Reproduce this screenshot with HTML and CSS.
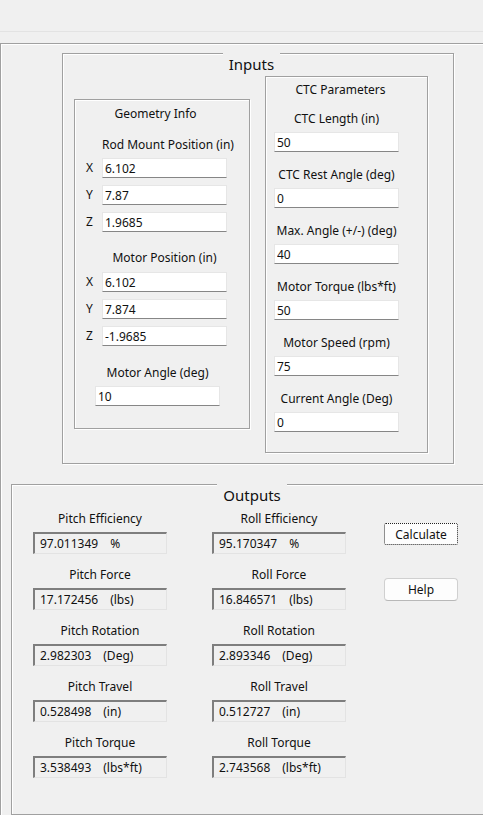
FILE: index.html
```html
<!DOCTYPE html>
<html lang="en">
<head>
  <meta charset="UTF-8" />
  <meta name="viewport" content="width=device-width, initial-scale=1.0" />
  <title>CTC Calculator</title>
  <link rel="stylesheet" href="styles.css">
</head>
<body>
  <div class="topbar"></div>

  <div class="panel">

    <!-- Inputs -->
    <div class="group inputs-group">
      <div class="group-title"><span>Inputs</span></div>
      <div class="inputs-row">

        <div class="sub geometry">
          <div class="sub-title geo-title">Geometry Info</div>

          <div class="geo-label">Rod Mount Position (in)</div>
          <div class="xyz first">
            <span class="axis">X</span><input type="text" value="6.102">
          </div>
          <div class="xyz">
            <span class="axis">Y</span><input type="text" value="7.87">
          </div>
          <div class="xyz">
            <span class="axis">Z</span><input type="text" value="1.9685">
          </div>

          <div class="geo-label motor-pos">Motor Position (in)</div>
          <div class="xyz first">
            <span class="axis">X</span><input type="text" value="6.102">
          </div>
          <div class="xyz">
            <span class="axis">Y</span><input type="text" value="7.874">
          </div>
          <div class="xyz">
            <span class="axis">Z</span><input type="text" value="-1.9685">
          </div>

          <div class="angle-field">
            <div class="field-label">Motor Angle (deg)</div>
            <input type="text" value="10">
          </div>
        </div>

        <div class="sub ctc">
          <div class="sub-title ctc-title">CTC Parameters</div>
          <div class="field">
            <div class="field-label">CTC Length (in)</div>
            <input type="text" value="50">
          </div>
          <div class="field">
            <div class="field-label">CTC Rest Angle (deg)</div>
            <input type="text" value="0">
          </div>
          <div class="field">
            <div class="field-label">Max. Angle (+/-) (deg)</div>
            <input type="text" value="40">
          </div>
          <div class="field">
            <div class="field-label">Motor Torque (lbs*ft)</div>
            <input type="text" value="50">
          </div>
          <div class="field">
            <div class="field-label">Motor Speed (rpm)</div>
            <input type="text" value="75">
          </div>
          <div class="field">
            <div class="field-label">Current Angle (Deg)</div>
            <input type="text" value="0">
          </div>
        </div>

      </div>
    </div>

    <!-- Outputs -->
    <div class="group outputs-group">
      <div class="group-title"><span>Outputs</span></div>
      <div class="outputs-row">

        <div class="out-col">
          <div class="out">
            <div class="field-label">Pitch Efficiency</div>
            <div class="readout">97.011349<span class="unit">%</span></div>
          </div>
          <div class="out">
            <div class="field-label">Pitch Force</div>
            <div class="readout">17.172456<span class="unit">(lbs)</span></div>
          </div>
          <div class="out">
            <div class="field-label">Pitch Rotation</div>
            <div class="readout">2.982303<span class="unit">(Deg)</span></div>
          </div>
          <div class="out">
            <div class="field-label">Pitch Travel</div>
            <div class="readout">0.528498<span class="unit">(in)</span></div>
          </div>
          <div class="out">
            <div class="field-label">Pitch Torque</div>
            <div class="readout">3.538493<span class="unit">(lbs*ft)</span></div>
          </div>
        </div>

        <div class="out-col roll">
          <div class="out">
            <div class="field-label">Roll Efficiency</div>
            <div class="readout">95.170347<span class="unit">%</span></div>
          </div>
          <div class="out">
            <div class="field-label">Roll Force</div>
            <div class="readout">16.846571<span class="unit">(lbs)</span></div>
          </div>
          <div class="out">
            <div class="field-label">Roll Rotation</div>
            <div class="readout">2.893346<span class="unit">(Deg)</span></div>
          </div>
          <div class="out">
            <div class="field-label">Roll Travel</div>
            <div class="readout">0.512727<span class="unit">(in)</span></div>
          </div>
          <div class="out">
            <div class="field-label">Roll Torque</div>
            <div class="readout">2.743568<span class="unit">(lbs*ft)</span></div>
          </div>
        </div>

        <div class="btn-col">
          <button class="btn calc">Calculate</button>
          <button class="btn help">Help</button>
        </div>

      </div>
    </div>

  </div>
</body>
</html>
```

FILE: styles.css
```css
* {
  box-sizing: border-box;
}
body {
  margin: 0;
  background-color: #f0f0f0;
  color: #111;
  font-family: 'Noto Sans', 'Open Sans', sans-serif;
  font-size: 12px;
  line-height: 16px;
  overflow: hidden;
  height: 815px;
}
.topbar {
  height: 32px;
  border-bottom: 1px solid #e3e3e3;
}
.panel {
  margin-top: 11px;
  height: 772px;
  border-top: 1px solid #a0a0a0;
  border-left: 1px solid #a0a0a0;
  box-shadow: inset 1px 1px #fff;
}

/* group boxes */
.group {
  border: 1px solid #a0a0a0;
  box-shadow: inset 1px 1px #fff, 1px 1px #fff;
}
.group-title {
  margin-top: -1px;
  height: 22px;
  text-align: center;
  font-size: 15px;
  line-height: 22px;
}
.group-title span {
  display: inline-block;
  background-color: #f0f0f0;
  padding: 0 6px;
}
.inputs-group {
  margin: 9px 0 0 61px;
  width: 392px;
  height: 411px;
}
.inputs-group .group-title {
  padding-right: 13px;
}
.inputs-row {
  display: flex;
  align-items: flex-start;
  padding-left: 11px;
  gap: 15px;
}
.sub {
  border: 1px solid #a0a0a0;
  box-shadow: inset 1px 1px #fff, 1px 1px #fff;
}
.sub-title {
  height: 16px;
  text-align: center;
}

/* geometry */
.geometry {
  margin-top: 24px;
  width: 176px;
  height: 330px;
}
.geo-title {
  margin-top: 6px;
  padding-right: 13px;
}
.geo-label {
  margin: 15px 0 0 27px;
  width: 125px;
  text-align: center;
  white-space: nowrap;
}
.geo-label.motor-pos {
  margin-top: 18px;
}
.xyz {
  display: flex;
  align-items: center;
  margin-top: 7px;
  padding-left: 11px;
}
.xyz.first {
  margin-top: 5px;
}
.motor-pos + .xyz.first {
  margin-top: 6px;
}
.axis {
  width: 16px;
}
.xyz input {
  width: 125px;
}
.angle-field {
  margin: 19px 0 0 20px;
  width: 125px;
}

/* ctc */
.ctc {
  margin-top: 1px;
  width: 163px;
  height: 377px;
}
.ctc-title {
  margin-top: 5px;
  padding-right: 12px;
}
.field {
  margin: 15px 0 0 8px;
  width: 125px;
}
.ctc-title + .field {
  margin-top: 13px;
}
.field-label {
  height: 16px;
  text-align: center;
  white-space: nowrap;
}
.field input,
.angle-field input {
  margin-top: 5px;
  width: 125px;
}

input {
  display: block;
  height: 20px;
  padding: 0 2px;
  font-family: inherit;
  font-size: 12px;
  color: #111;
  background-color: #fff;
  border: 1px solid #e6e6e6;
  border-bottom-color: #868686;
  outline: none;
}

/* outputs */
.outputs-group {
  margin: 20px 0 0 10px;
  width: 490px;
  height: 331px;
  border-right: none;
}
.outputs-group .group-title {
  padding-right: 9px;
}
.outputs-row {
  display: flex;
  align-items: flex-start;
  padding-left: 21px;
}
.out-col {
  width: 134px;
}
.out-col.roll {
  margin-left: 45px;
}
.out {
  margin-top: 13px;
}
.out:first-child {
  margin-top: 5px;
}
.readout {
  margin-top: 5px;
  height: 22px;
  padding-left: 5px;
  line-height: 20px;
  border-top: 2px solid #7e7e7e;
  border-left: 2px solid #7e7e7e;
  border-right: 1px solid #e3e3e3;
  border-bottom: 1px solid #e3e3e3;
  background-color: #f0f0f0;
  white-space: nowrap;
}
.unit {
  margin-left: 12px;
}
.btn-col {
  margin-left: 38px;
  display: flex;
  flex-direction: column;
}
.btn {
  width: 74px;
  font-family: inherit;
  font-size: 12px;
  color: #111;
  background-color: #fdfdfd;
  border: 1px solid #d0d0d0;
  border-bottom-color: #b8b8b8;
  border-radius: 4px;
  padding: 0;
}
.btn.calc {
  margin-top: 17px;
  height: 22px;
  border: 1px dotted #222;
  border-radius: 2px;
}
.btn.help {
  margin-top: 33px;
  height: 23px;
}
```
